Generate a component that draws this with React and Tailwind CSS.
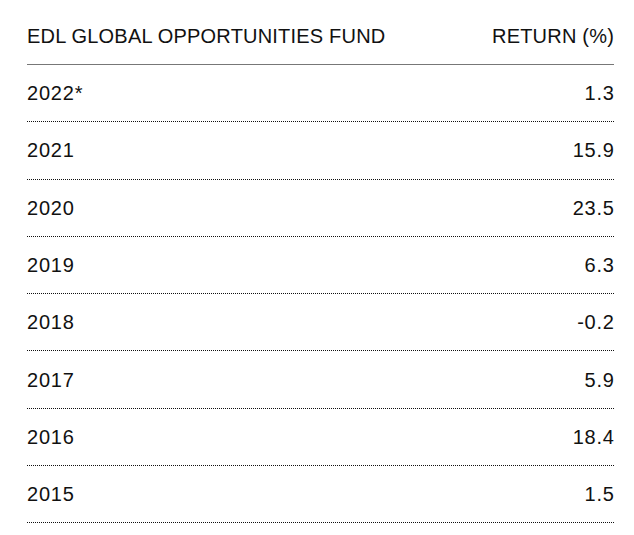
const ROWS = [
  { year: "2022*", ret: "1.3" },
  { year: "2021", ret: "15.9" },
  { year: "2020", ret: "23.5" },
  { year: "2019", ret: "6.3" },
  { year: "2018", ret: "-0.2" },
  { year: "2017", ret: "5.9" },
  { year: "2016", ret: "18.4" },
  { year: "2015", ret: "1.5" },
];

export default function App() {
  return (
    <div className="min-h-screen bg-white pl-[27px] pr-[20px] font-['Liberation_Sans',Arial,sans-serif] text-[20px] text-[#111]">
      <div className="flex h-[65px] items-center justify-between border-b border-[#777] pt-[7px] tracking-[0.2px]">
        <span>EDL GLOBAL OPPORTUNITIES FUND</span>
        <span>RETURN (%)</span>
      </div>
      {ROWS.map((r) => (
        <div
          key={r.year}
          className="flex h-[57.3px] items-center justify-between border-b border-dotted border-[#111] tracking-[0.8px]"
        >
          <span>{r.year}</span>
          <span className="-mr-[0.8px]">{r.ret}</span>
        </div>
      ))}
    </div>
  );
}
